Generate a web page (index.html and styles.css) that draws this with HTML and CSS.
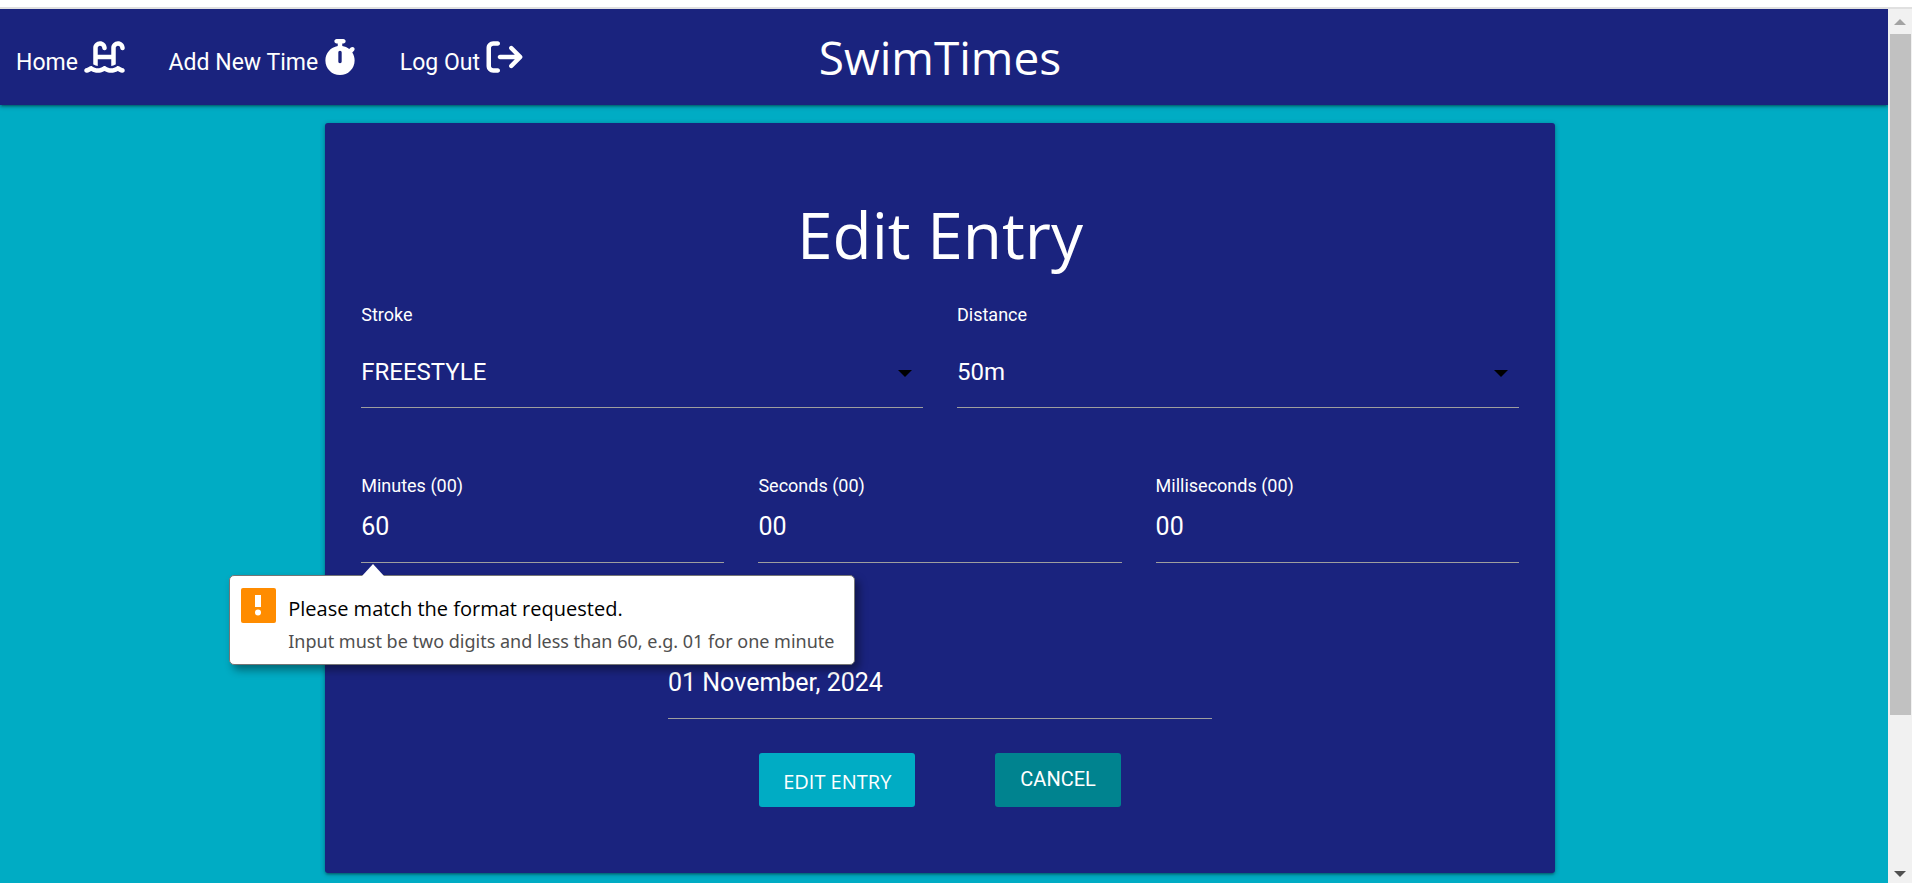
FILE: index.html
```html
<!DOCTYPE html>
<html lang="en">
<head>
<meta charset="utf-8">
<title>SwimTimes</title>
<link rel="stylesheet" href="styles.css">
</head>
<body>
<div class="topline"></div>
<div class="viewport">
  <div class="page">
    <header class="nav">
      <nav class="nav-links">
        <a href="#">Home
          <svg class="icon icon-ladder" viewBox="0 0 576 512" aria-hidden="true"><path d="M128 127.7C128 74.9 170.9 32 223.7 32c48.3 0 89 36 95 83.9l1 8.2c2.2 17.5-10.2 33.5-27.8 35.7s-33.5-10.2-35.7-27.8l-1-8.2c-2-15.9-15.5-27.8-31.5-27.8c-17.5 0-31.7 14.2-31.7 31.7V224H384V127.7C384 74.9 426.9 32 479.7 32c48.3 0 89 36 95 83.9l1 8.2c2.2 17.5-10.2 33.5-27.8 35.7s-33.5-10.2-35.7-27.8l-1-8.2c-2-15.9-15.5-27.8-31.5-27.8c-17.5 0-31.7 14.2-31.7 31.7V361c-1.6 1-3.3 2-4.8 3.1c-18 12.4-40.1 20.3-59.2 20.3V288H192v96.5c-19 0-41.2-7.9-59.1-20.3c-1.6-1.1-3.2-2.2-4.9-3.1V127.7zM306.5 389.9C329 405.4 356.5 416 384 416c26.9 0 55.4-10.8 77.4-26.1l0 0c11.9-8.5 28.1-7.8 39.2 1.7c14.4 11.9 32.5 21 50.6 25.2c17.2 4 27.9 21.2 23.9 38.4s-21.2 27.9-38.4 23.9c-24.5-5.7-44.9-16.5-58.2-25C449.5 469.7 417 480 384 480c-31.9 0-60.6-9.9-80.4-18.9c-5.8-2.7-11.1-5.3-15.6-7.7c-4.5 2.4-9.7 5.1-15.6 7.7c-19.8 9-48.5 18.9-80.4 18.9c-33 0-65.5-10.3-94.5-25.8c-13.4 8.4-33.7 19.3-58.2 25c-17.2 4-34.4-6.7-38.4-23.9s6.7-34.4 23.9-38.4c18.1-4.2 36.2-13.3 50.6-25.2c11.1-9.4 27.3-10.1 39.2-1.7l0 0C136.7 405.2 165.1 416 192 416c27.5 0 55-10.6 77.5-26.1c11.1-7.9 25.9-7.9 37 0z"/></svg></a>
        <a href="#">Add New Time
          <svg class="icon icon-watch" viewBox="0 0 448 512" aria-hidden="true"><path d="M176 0c-17.7 0-32 14.3-32 32s14.3 32 32 32h16V98.4C92.3 113.8 16 200 16 304c0 114.9 93.1 208 208 208s208-93.1 208-208c0-41.8-12.3-80.7-33.5-113.2l24.1-24.1c12.5-12.5 12.5-32.8 0-45.3s-32.8-12.5-45.3 0L355.7 143c-28.1-23-62.2-38.8-99.7-44.6V64h16c17.7 0 32-14.3 32-32s-14.3-32-32-32H224 176zm72 192V320c0 13.3-10.7 24-24 24s-24-10.7-24-24V192c0-13.3 10.7-24 24-24s24 10.7 24 24z"/></svg></a>
        <a href="#">Log Out
          <svg class="icon icon-exit" viewBox="0 0 512 512" aria-hidden="true"><path d="M502.6 278.6c12.5-12.5 12.5-32.8 0-45.3l-128-128c-12.5-12.5-32.8-12.5-45.3 0s-12.5 32.8 0 45.3L402.7 224 192 224c-17.7 0-32 14.3-32 32s14.3 32 32 32l210.7 0-73.4 73.4c-12.5 12.5-12.5 32.8 0 45.3s32.8 12.5 45.3 0l128-128zM160 96c17.7 0 32-14.3 32-32s-14.3-32-32-32L96 32C43 32 0 75 0 128L0 384c0 53 43 96 96 96l64 0c17.7 0 32-14.3 32-32s-14.3-32-32-32l-64 0c-17.7 0-32-14.3-32-32l0-256c0-17.7 14.3-32 32-32l64 0z"/></svg></a>
      </nav>
      <a class="brand" href="#">SwimTimes</a>
    </header>
    <main class="main">
      <form class="card">
        <h1 class="title">Edit Entry</h1>
        <div class="row row-selects">
          <div class="field field-select">
            <label for="stroke">Stroke</label>
            <select class="control" id="stroke"><option>FREESTYLE</option></select>
          </div>
          <div class="field field-select">
            <label for="distance">Distance</label>
            <select class="control" id="distance"><option>50m</option></select>
          </div>
        </div>
        <div class="row row-time">
          <div class="field">
            <label for="minutes">Minutes (00)</label>
            <input class="control" id="minutes" type="text" value="60" aria-describedby="minutes-error">
            <div class="bubble" id="minutes-error" role="alert">
              <svg class="bubble-icon" viewBox="0 0 35 35" aria-hidden="true"><rect class="badge" width="35" height="35" rx="2"/><rect class="mark" x="14" y="7" width="6" height="12"/><circle class="mark" cx="17" cy="24.5" r="3"/></svg>
              <div>
                <p class="bubble-title">Please match the format requested.</p>
                <p class="bubble-text">Input must be two digits and less than 60, e.g. 01 for one minute</p>
              </div>
            </div>
          </div>
          <div class="field">
            <label for="seconds">Seconds (00)</label>
            <input class="control" id="seconds" type="text" value="00">
          </div>
          <div class="field">
            <label for="millis">Milliseconds (00)</label>
            <input class="control" id="millis" type="text" value="00">
          </div>
        </div>
        <input class="control date" type="text" value="01 November, 2024" aria-label="Date">
        <div class="actions">
          <button class="btn btn-edit" type="submit">EDIT ENTRY</button>
          <button class="btn btn-cancel" type="button">CANCEL</button>
        </div>
      </form>
    </main>
  </div>
  <div class="scrollbar" aria-hidden="true">
    <span class="arrow arrow-up"></span>
    <div class="track"><div class="thumb"></div></div>
    <span class="arrow arrow-down"></span>
  </div>
</div>
</body>
</html>
```
FILE: styles.css
```css
* {
  box-sizing: border-box;
}

body {
  margin: 0;
  height: 100vh;
  display: flex;
  flex-direction: column;
  overflow: hidden;
  font-family: Roboto, "Liberation Sans", sans-serif;
  color: #fff;
  background: #fff;
}

.topline {
  flex: none;
  height: 9px;
  border-bottom: 2px solid #e0e0e0;
}

.viewport {
  flex: 1;
  min-height: 0;
  display: flex;
}

.page {
  flex: 1;
  min-width: 0;
  overflow: hidden;
  background: #00acc4;
}

.nav {
  display: grid;
  grid-template-columns: 1fr auto 1fr;
  align-items: center;
  height: 96px;
  padding: 0 24px 0 16px;
  background: #1a237e;
  box-shadow: 0 2px 2px rgba(0, 0, 0, .14), 0 3px 1px -2px rgba(0, 0, 0, .12), 0 1px 5px rgba(0, 0, 0, .3);
}

.nav-links {
  display: flex;
  gap: 44px;
  padding-top: 5px;
}

.nav-links a {
  font-size: 23px;
  line-height: 36px;
  white-space: nowrap;
  color: #fff;
  text-decoration: none;
}

.icon {
  height: 36px;
  vertical-align: -5px;
  fill: #fff;
}

.icon-ladder {
  width: 41px;
}

.icon-watch {
  width: 32px;
}

.icon-exit {
  width: 37px;
}

.brand {
  font-family: "Open Sans", "Noto Sans", sans-serif;
  font-size: 46px;
  line-height: 56px;
  color: #fff;
  text-decoration: none;
}

.main {
  padding: 18px 8px 18px 0;
}

.card {
  width: 65.4%;
  margin: 0 auto;
  padding: 76px 36px 66px;
  border-radius: 3px;
  background: #1a237e;
  box-shadow: 0 2px 2px rgba(0, 0, 0, .14), 0 3px 1px -2px rgba(0, 0, 0, .12), 0 1px 5px rgba(0, 0, 0, .3);
}

.title {
  margin: 0 0 32px;
  font-family: "Open Sans", "Noto Sans", sans-serif;
  font-size: 64px;
  line-height: 72px;
  font-weight: 400;
  text-align: center;
}

.row {
  display: grid;
  gap: 34px;
}

.row-selects {
  grid-template-columns: repeat(2, 1fr);
  margin-bottom: 66px;
}

.row-time {
  grid-template-columns: repeat(3, 1fr);
  margin-bottom: 92px;
}

.field {
  position: relative;
  display: flex;
  flex-direction: column;
}

.field label {
  font-size: 18px;
  line-height: 24px;
  margin-bottom: 1px;
}

.field-select label {
  margin-bottom: 17px;
}

.control {
  display: block;
  width: 100%;
  height: 64px;
  padding: 0 0 8px;
  border: 0;
  border-bottom: 1px solid #9e9e9e;
  border-radius: 0;
  outline: 0;
  appearance: none;
  background: transparent;
  color: #fff;
  font-family: inherit;
  font-size: 25px;
}

.field-select .control {
  font-size: 24px;
}

.field-select::after {
  content: "";
  position: absolute;
  right: 11px;
  bottom: 31px;
  border: 7px solid transparent;
  border-top-color: #000;
  border-bottom: 0;
}

.date {
  width: 47%;
  margin: 0 auto 34px;
}

.actions {
  display: flex;
  justify-content: center;
  gap: 80px;
}

.btn {
  height: 54px;
  border: 0;
  border-radius: 3px;
  color: #fff;
  font-size: 20px;
}

.btn-edit {
  padding: 2px 24px 0;
  background: #00acc4;
  font-family: "Open Sans", "Noto Sans", sans-serif;
}

.btn-cancel {
  padding: 0 25px 2px;
  background: #00838f;
  font-family: inherit;
}

.bubble {
  position: absolute;
  z-index: 2;
  top: calc(100% + 12px);
  left: -132px;
  min-width: 626px;
  display: flex;
  gap: 12px;
  padding: 12px 12px 7px 11px;
  border: 1px solid #757575;
  border-radius: 5px;
  background: #fff;
  box-shadow: 4px 5px 8px rgba(0, 0, 0, .4);
  font-family: "Noto Sans", "Open Sans", sans-serif;
  white-space: nowrap;
}

.bubble::before {
  content: "";
  position: absolute;
  top: -12px;
  left: 132px;
  border: 11px solid transparent;
  border-top: 0;
  border-bottom: 12px solid #fff;
}

.bubble-icon {
  flex: none;
  width: 35px;
  height: 35px;
}

.badge {
  fill: #ff8c00;
}

.mark {
  fill: #fff;
}

.bubble p {
  margin: 0;
}

.bubble .bubble-title {
  padding-top: 5px;
  font-family: "Open Sans", "Noto Sans", sans-serif;
  font-size: 20px;
  line-height: 32px;
  color: #000;
}

.bubble-text {
  font-size: 18px;
  line-height: 32px;
  color: #4f4f4f;
}

.scrollbar {
  flex: none;
  width: 24px;
  display: flex;
  flex-direction: column;
  background: #f1f1f1;
}

.arrow {
  flex: none;
  height: 25px;
  display: flex;
  align-items: center;
  justify-content: center;
}

.arrow::before {
  content: "";
  border: 6px solid transparent;
}

.arrow-up::before {
  border-top: 0;
  border-bottom-color: #a3a3a3;
}

.arrow-down {
  height: 19px;
}

.arrow-down::before {
  border-bottom: 0;
  border-top-color: #505050;
}

.track {
  flex: 1;
  padding: 0 1px 0 2px;
}

.thumb {
  height: 82%;
  background: #c1c1c1;
}
```
